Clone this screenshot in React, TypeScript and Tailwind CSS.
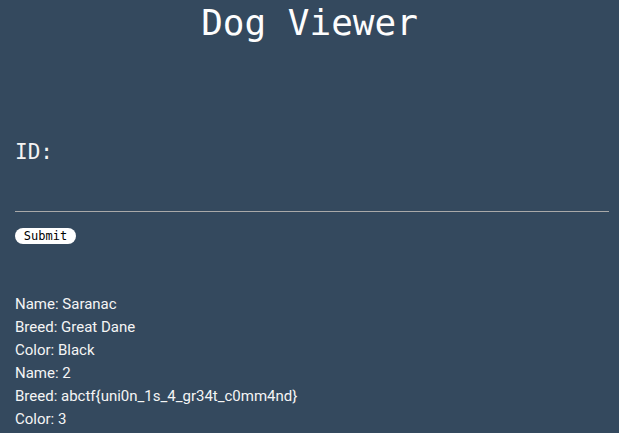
export default function App() {
  const lines = [
    "Name: Saranac",
    "Breed: Great Dane",
    "Color: Black",
    "Name: 2",
    "Breed: abctf{uni0n_1s_4_gr34t_c0mm4nd}",
    "Color: 3",
  ];
  return (
    <div className="min-h-[433px] w-full bg-[#34495e] text-white overflow-hidden">
      <h1 className="text-center text-[36px] leading-[36px] pt-[5px] text-[#fdfdfd] font-['DejaVu_Sans_Mono','Liberation_Mono',monospace]">
        Dog Viewer
      </h1>
      <div className="pl-[15px] pr-[10px] flex flex-col items-start">
        <div className="mt-[99px] text-[21px] leading-[24px] text-[#f4f4f4] font-['DejaVu_Sans_Mono','Liberation_Mono',monospace]">
          ID:
        </div>
        <div className="mt-[28px] h-[20px] w-full border-b border-[#a9a9a9]" />
        <button className="mt-[16px] h-[16px] w-[61px] rounded-full bg-white text-black text-[12px] leading-[16px] flex items-center justify-center font-['DejaVu_Sans_Mono','Liberation_Mono',monospace]">
          Submit
        </button>
        <div className="mt-[49px] text-[15px] leading-[23px] text-[#f5f5f5] font-['Roboto','Noto_Sans',sans-serif]">
          {lines.map((l) => (
            <div key={l}>{l}</div>
          ))}
        </div>
      </div>
    </div>
  );
}
